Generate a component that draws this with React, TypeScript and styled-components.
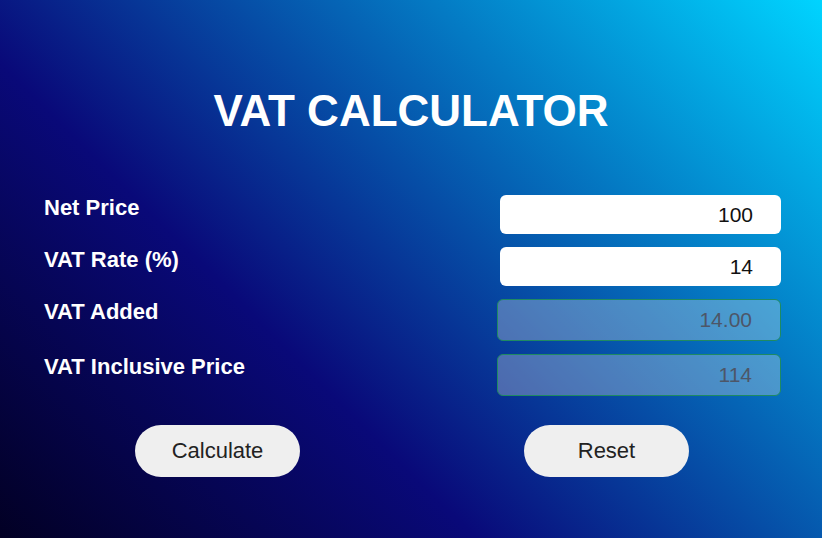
import { ReactElement, useState } from 'react';
import styled, { createGlobalStyle } from 'styled-components';

const GlobalStyle = createGlobalStyle`
  html, body {
    margin: 0;
    padding: 0;
  }
  body {
    font-family: 'Liberation Sans', Arial, sans-serif;
  }
`;

const Page = styled.div`
  min-height: 100vh;
  box-sizing: border-box;
  padding-top: 86px;
  background: linear-gradient(45deg, #020024 0%, #090979 35%, #00d4ff 100%);
`;

const Container = styled.div`
  width: 780px;
  margin: 0 auto;
`;

const Title = styled.h1`
  margin: 0 0 59px;
  text-align: center;
  color: #ffffff;
  font-size: 44px;
  font-weight: 700;
  line-height: 50px;
`;

const Form = styled.div`
  display: flex;
  flex-direction: column;
  gap: 13px;
  padding: 0 20px 0 23px;
`;

const Row = styled.div`
  display: flex;
  justify-content: space-between;
  align-items: flex-start;
`;

const Label = styled.label`
  padding-top: 1px;
  color: #ffffff;
  font-size: 22px;
  font-weight: 700;
  line-height: 24px;
`;

const Input = styled.input<{ $readOnly?: boolean }>`
  box-sizing: border-box;
  width: ${(p) => (p.$readOnly ? '284px' : '281px')};
  height: ${(p) => (p.$readOnly ? '42px' : '39px')};
  padding: 0 28px 0 10px;
  border: ${(p) => (p.$readOnly ? '1px solid #1f8a62' : 'none')};
  border-radius: 6px;
  background: ${(p) => (p.$readOnly ? 'rgba(239, 239, 239, 0.3)' : '#ffffff')};
  color: ${(p) => (p.$readOnly ? '#4d5668' : '#111111')};
  font-family: 'Liberation Sans', Arial, sans-serif;
  font-size: 21px;
  text-align: right;
  outline: none;
`;

const Buttons = styled.div`
  display: flex;
  justify-content: space-around;
  margin-top: 29px;
  padding-left: 2px;
`;

const Button = styled.button`
  width: 165px;
  height: 52px;
  border: none;
  border-radius: 26px;
  background: #efefef;
  color: #222222;
  font-family: 'Liberation Sans', Arial, sans-serif;
  font-size: 22px;
  cursor: pointer;
`;

const App = (): ReactElement => {
  const [net, setNet] = useState('100');
  const [rate, setRate] = useState('14');
  const [added, setAdded] = useState('14.00');
  const [total, setTotal] = useState('114');

  const calculate = (): void => {
    const n = parseFloat(net) || 0;
    const r = parseFloat(rate) || 0;
    const vat = (n * r) / 100;
    setAdded(vat.toFixed(2));
    setTotal(String(+(n + vat).toFixed(2)));
  };

  const reset = (): void => {
    setNet('');
    setRate('');
    setAdded('');
    setTotal('');
  };

  return (
    <Page>
      <GlobalStyle />
      <Container>
        <Title>VAT CALCULATOR</Title>
        <Form>
          <Row>
            <Label>Net Price</Label>
            <Input value={net} onChange={(e) => setNet(e.target.value)} />
          </Row>
          <Row>
            <Label>VAT Rate (%)</Label>
            <Input value={rate} onChange={(e) => setRate(e.target.value)} />
          </Row>
          <Row>
            <Label>VAT Added</Label>
            <Input $readOnly disabled value={added} />
          </Row>
          <Row>
            <Label>VAT Inclusive Price</Label>
            <Input $readOnly disabled value={total} />
          </Row>
        </Form>
        <Buttons>
          <Button onClick={calculate}>Calculate</Button>
          <Button onClick={reset}>Reset</Button>
        </Buttons>
      </Container>
    </Page>
  );
};

export default App;
